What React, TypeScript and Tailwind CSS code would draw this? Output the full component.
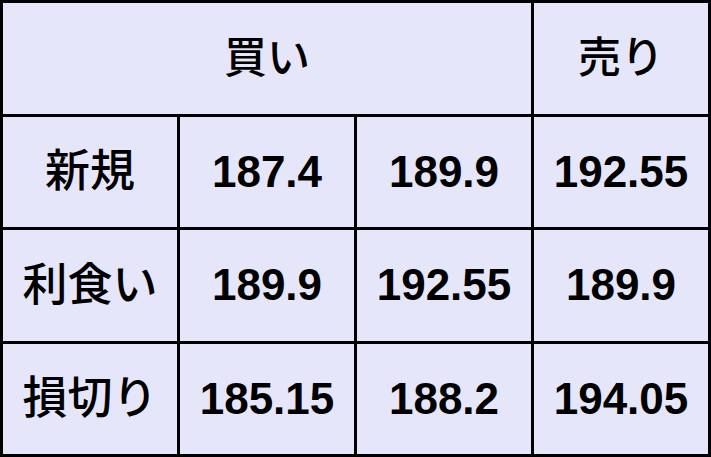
const rows: { label: string; values: string[] }[] = [
  { label: '新規', values: ['187.4', '189.9', '192.55'] },
  { label: '利食い', values: ['189.9', '192.55', '189.9'] },
  { label: '損切り', values: ['185.15', '188.2', '194.05'] },
];

const cell = 'flex items-center justify-center bg-[#e6e6fa]';

export default function App() {
  return (
    <div className="w-[711px] h-[457px] grid grid-cols-4 grid-rows-4 gap-[3px] p-[3px] bg-black text-black font-['Liberation_Sans','Noto_Sans_CJK_JP',sans-serif]">
      <div className={`${cell} col-span-3 text-[43px] font-medium`}>買い</div>
      <div className={`${cell} text-[43px] font-medium`}>売り</div>
      {rows.map((row) => (
        <>
          <div key={row.label} className={`${cell} text-[45px] font-medium`}>
            {row.label}
          </div>
          {row.values.map((v, i) => (
            <div key={row.label + i} className={`${cell} text-[44px] font-bold`}>
              {v}
            </div>
          ))}
        </>
      ))}
    </div>
  );
}
